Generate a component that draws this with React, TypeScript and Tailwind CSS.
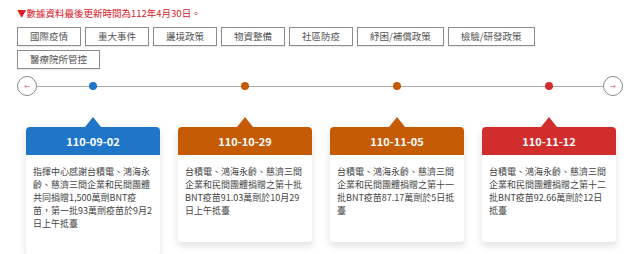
import React from 'react';

const tags = ['國際疫情', '重大事件', '邊境政策', '物資整備', '社區防疫', '紓困/補償政策', '檢驗/研發政策', '醫療院所管控'];

const events = [
  {
    date: '110-09-02',
    color: 'bg-[#1f76c9]',
    tri: 'border-b-[#1f76c9]',
    text: '指揮中心感謝台積電、鴻海永齡、慈濟三間企業和民間團體共同捐贈1,500萬劑BNT疫苗，第一批93萬劑疫苗於9月2日上午抵臺',
  },
  {
    date: '110-10-29',
    color: 'bg-[#c55b05]',
    tri: 'border-b-[#c55b05]',
    text: '台積電、鴻海永齡、慈濟三間企業和民間團體捐贈之第十批BNT疫苗91.03萬劑於10月29日上午抵臺',
  },
  {
    date: '110-11-05',
    color: 'bg-[#c55b05]',
    tri: 'border-b-[#c55b05]',
    text: '台積電、鴻海永齡、慈濟三間企業和民間團體捐贈之第十一批BNT疫苗87.17萬劑於5日抵臺',
  },
  {
    date: '110-11-12',
    color: 'bg-[#d12d2d]',
    tri: 'border-b-[#d12d2d]',
    text: '台積電、鴻海永齡、慈濟三間企業和民間團體捐贈之第十二批BNT疫苗92.66萬劑於12日抵臺',
  },
];

const dotColors = ['bg-[#1f76c9]', 'bg-[#c55b05]', 'bg-[#c55b05]', 'bg-[#d12d2d]'];

function NavCircle({ dir }: { dir: 'left' | 'right' }) {
  return (
    <button className="w-[20px] h-[20px] rounded-full border border-[#8a8a8a] bg-white flex items-center justify-center">
      <svg width="6" height="5" viewBox="0 0 7 5" fill="none" stroke="#e0607a" strokeWidth="0.8">
        {dir === 'left' ? (
          <path d="M6.5 2.5H0.8M2.6 0.7L0.8 2.5l1.8 1.8" />
        ) : (
          <path d="M0.5 2.5h5.7M4.4 0.7l1.8 1.8-1.8 1.8" />
        )}
      </svg>
    </button>
  );
}

export default function App() {
  return (
    <div className="w-[640px] h-[254px] overflow-hidden bg-white font-['Noto_Sans_CJK_TC','Noto_Sans',sans-serif]">
      <div className="pl-[17px] pt-[6px]">
        <p className="text-[9.5px] leading-[14px] text-[#d9202a]">▼數據資料最後更新時間為112年4月30日。</p>

        {/* category filters */}
        <div className="flex flex-wrap gap-x-[4px] gap-y-[4px] mt-[7px] w-[530px]">
          {tags.map((t) => (
            <button
              key={t}
              className="h-[19px] px-[12px] border border-[#8c8c8c] bg-white text-[9.5px] leading-none text-[#555] shadow-[0_1px_1px_rgba(0,0,0,0.08)]"
            >
              {t}
            </button>
          ))}
        </div>
      </div>

      {/* timeline axis */}
      <div className="relative h-[20px] mt-[7px]">
        <div className="absolute left-[27px] right-[27px] top-[9.5px] h-[1.5px] bg-[#a8a8a8]" />
        <div className="absolute left-[17px] top-0">
          <NavCircle dir="left" />
        </div>
        <div className="absolute left-[603px] top-0">
          <NavCircle dir="right" />
        </div>
        <div className="relative ml-[26px] grid grid-cols-[repeat(4,134px)] gap-x-[18px] h-full items-center">
          {dotColors.map((c, i) => (
            <div key={i} className="flex justify-center">
              <span className={`w-[8px] h-[8px] rounded-full ${c}`} />
            </div>
          ))}
        </div>
      </div>

      {/* event cards */}
      <div className="ml-[26px] mt-[31px] grid grid-cols-[repeat(4,134px)] gap-x-[18px] items-start">
        {events.map((e) => (
          <div key={e.date} className="relative">
            <div
              className={`absolute left-1/2 -translate-x-1/2 -top-[10px] w-0 h-0 border-x-[8px] border-x-transparent border-b-[10px] ${e.tri}`}
            />
            <div className="rounded-[4px] bg-white shadow-[0_4px_8px_rgba(0,0,0,0.12)] overflow-hidden">
              <div className={`h-[28px] flex items-center justify-center text-white text-[11px] font-semibold ${e.color}`}>
                {e.date}
              </div>
              <p className="px-[7px] pt-[10px] pb-[25px] text-[9px] leading-[13px] text-[#444]">{e.text}</p>
            </div>
          </div>
        ))}
      </div>
    </div>
  );
}
